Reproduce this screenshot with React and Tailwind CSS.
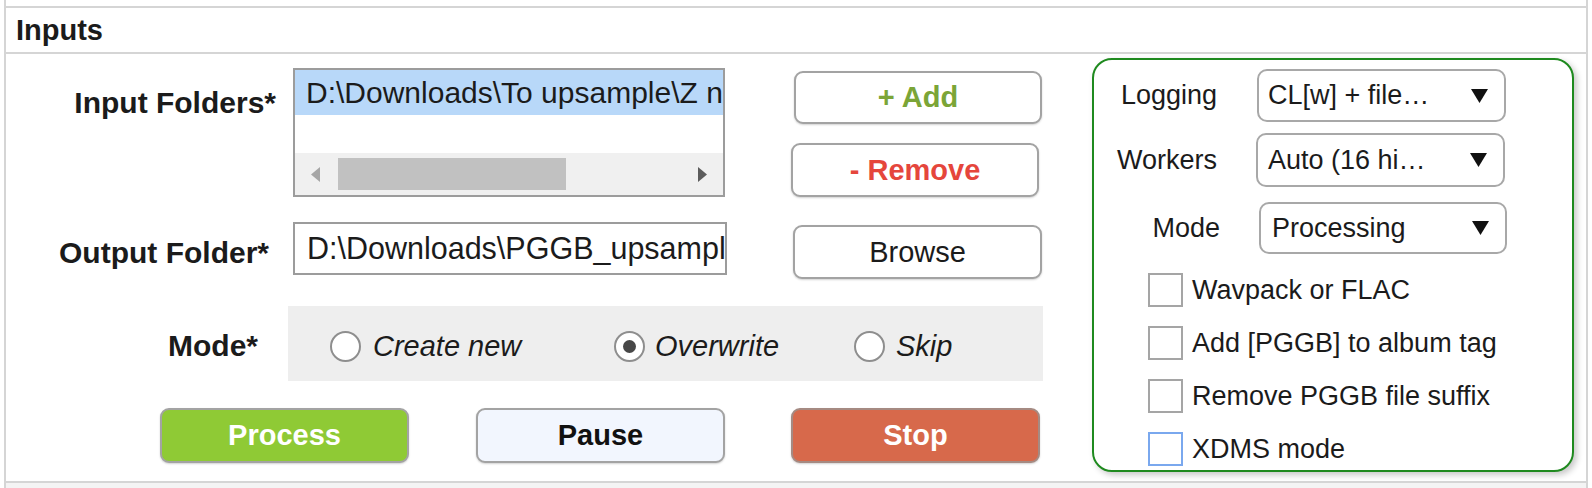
import React from "react";

function Btn({ className = "", children }) {
  return (
    <div
      className={
        "rounded-[9px] border-2 border-[#a3a3a3] flex items-center justify-center text-[29px] leading-none shadow-[0_1px_2px_rgba(0,0,0,0.18)] " +
        className
      }
    >
      {children}
    </div>
  );
}

function Radio({ checked }) {
  return (
    <div className="w-[31px] h-[31px] rounded-full border-2 border-[#8e8e8e] bg-white flex items-center justify-center shrink-0">
      {checked && <div className="w-[13px] h-[13px] rounded-full bg-[#474747]" />}
    </div>
  );
}

function Dropdown({ className = "", text }) {
  return (
    <div
      className={
        "border-2 border-[#a8a8a8] rounded-[10px] bg-white flex items-center justify-between pr-[16px] text-[27px] leading-none whitespace-nowrap " +
        className
      }
    >
      <span>{text}</span>
      <svg width="17" height="14" viewBox="0 0 17 14">
        <polygon points="0,0 17,0 8.5,14" fill="#111" />
      </svg>
    </div>
  );
}

function Check({ label, blue }) {
  return (
    <div className="flex items-center pl-[54px]">
      <div
        className={
          "w-[35px] h-[34px] border-2 bg-white shrink-0 " +
          (blue ? "border-[#7aa8ee]" : "border-[#a5a5a5]")
        }
      />
      <span className="ml-[9px] text-[27px] leading-none whitespace-nowrap">{label}</span>
    </div>
  );
}

export default function App() {
  return (
    <div className="w-[1592px] h-[488px] bg-white font-['Liberation_Sans',Arial,sans-serif] text-[#1b1b1b] overflow-hidden">
      <div className="ml-[4px] w-[1584px] h-[488px] border-x-2 border-[#d5d5d5] flex flex-col">
        <div className="h-[6px] shrink-0" />
        <div className="h-[46px] shrink-0 border-t-2 border-[#d5d5d5] flex items-center pl-[10px] text-[29px] font-bold leading-none">
          Inputs
        </div>
        <div className="h-[429px] shrink-0 border-t-2 border-[#d5d5d5] flex">
          {/* left column */}
          <div className="w-[1086px] shrink-0 flex flex-col pt-[14px]">
            {/* row 1 */}
            <div className="flex items-start">
              <div className="w-[287px] pr-[17px] text-right mt-[18px] leading-[34px] text-[30px] font-bold whitespace-nowrap">
                Input Folders*
              </div>
              <div className="w-[432px] h-[129px] border-2 border-[#9c9c9c] bg-white flex flex-col overflow-hidden">
                <div className="h-[45px] bg-[#b8d8f9] pl-[11px] flex items-center text-[30px] leading-none whitespace-nowrap overflow-hidden">
                  {"D:\\Downloads\\To upsample\\Z new"}
                </div>
                <div className="flex-1" />
                <div className="h-[42px] bg-[#f0f0f0] flex items-center">
                  <svg className="ml-[16px]" width="9" height="15" viewBox="0 0 9 15">
                    <polygon points="9,0 9,15 0,7.5" fill="#a6a6a6" />
                  </svg>
                  <div className="ml-[18px] w-[228px] h-[32px] bg-[#c1c1c1]" />
                  <div className="flex-1" />
                  <svg className="mr-[16px]" width="9" height="15" viewBox="0 0 9 15">
                    <polygon points="0,0 0,15 9,7.5" fill="#5c5c5c" />
                  </svg>
                </div>
              </div>
              <div className="ml-[66px] flex flex-col">
                <Btn className="ml-[3px] mt-[3px] w-[248px] h-[53px] bg-white font-bold text-[#7ba537]">
                  + Add
                </Btn>
                <Btn className="mt-[19px] w-[248px] h-[54px] bg-white font-bold text-[#e5463c]">
                  - Remove
                </Btn>
              </div>
            </div>

            {/* row 2 */}
            <div className="mt-[25px] flex items-start">
              <div className="w-[287px] pr-[24px] text-right mt-[14px] leading-[34px] text-[30px] font-bold whitespace-nowrap">
                Output Folder*
              </div>
              <div className="w-[434px] h-[53px] border-2 border-[#9c9c9c] bg-white pl-[12px] flex items-center text-[30.5px] leading-none whitespace-nowrap overflow-hidden">
                {"D:\\Downloads\\PGGB_upsampled"}
              </div>
              <Btn className="ml-[66px] mt-[3px] w-[249px] h-[54px] bg-white">Browse</Btn>
            </div>

            {/* row 3 */}
            <div className="mt-[27px] flex items-start">
              <div className="w-[282px] pr-[30px] text-right mt-[23px] leading-[34px] text-[30px] font-bold whitespace-nowrap">
                Mode*
              </div>
              <div className="w-[755px] h-[75px] bg-[#eeeeee] flex items-center pt-[5px] text-[29px] italic leading-none">
                <div className="w-[326px] pl-[42px] flex items-center shrink-0">
                  <Radio />
                  <span className="ml-[12px] whitespace-nowrap">Create new</span>
                </div>
                <div className="w-[240px] flex items-center shrink-0">
                  <Radio checked />
                  <span className="ml-[10px] whitespace-nowrap">Overwrite</span>
                </div>
                <div className="flex items-center">
                  <Radio />
                  <span className="ml-[11px] whitespace-nowrap">Skip</span>
                </div>
              </div>
            </div>

            {/* row 4 */}
            <div className="mt-[27px] flex">
              <Btn className="ml-[154px] w-[249px] h-[55px] bg-[#8fca35] border-[#8f9a86] text-white font-bold">
                Process
              </Btn>
              <Btn className="ml-[67px] w-[249px] h-[55px] bg-[#f2f6fe] font-bold text-[#111]">
                Pause
              </Btn>
              <Btn className="ml-[66px] w-[249px] h-[55px] bg-[#d7694b] border-[#a58a82] text-white font-bold">
                Stop
              </Btn>
            </div>
          </div>

          {/* right panel */}
          <div className="mt-[4px] w-[482px] h-[414px] shrink-0 border-2 border-[#1f8a1f] rounded-[20px] bg-white shadow-[3px_3px_6px_rgba(0,0,0,0.22)] flex flex-col pt-[9px]">
            <div className="flex items-center">
              <div className="w-[123px] text-right text-[27px] leading-none">Logging</div>
              <Dropdown className="ml-[40px] w-[249px] h-[53px] pl-[9px]" text="CL[w] + file…" />
            </div>
            <div className="mt-[11px] flex items-center">
              <div className="w-[123px] text-right text-[27px] leading-none">Workers</div>
              <Dropdown className="ml-[39px] w-[249px] h-[54px] pl-[10px]" text="Auto (16 hi…" />
            </div>
            <div className="mt-[15px] flex items-center">
              <div className="w-[126px] text-right text-[27px] leading-none">Mode</div>
              <Dropdown className="ml-[39px] w-[248px] h-[52px] pl-[11px]" text="Processing" />
            </div>
            <div className="mt-[19px] flex flex-col gap-[19px]">
              <Check label="Wavpack or FLAC" />
              <Check label="Add [PGGB] to album tag" />
              <Check label="Remove PGGB file suffix" />
              <Check label="XDMS mode" blue />
            </div>
          </div>
        </div>
        <div className="flex-1 border-t-2 border-[#d5d5d5] bg-[#f4f4f4]" />
      </div>
    </div>
  );
}
